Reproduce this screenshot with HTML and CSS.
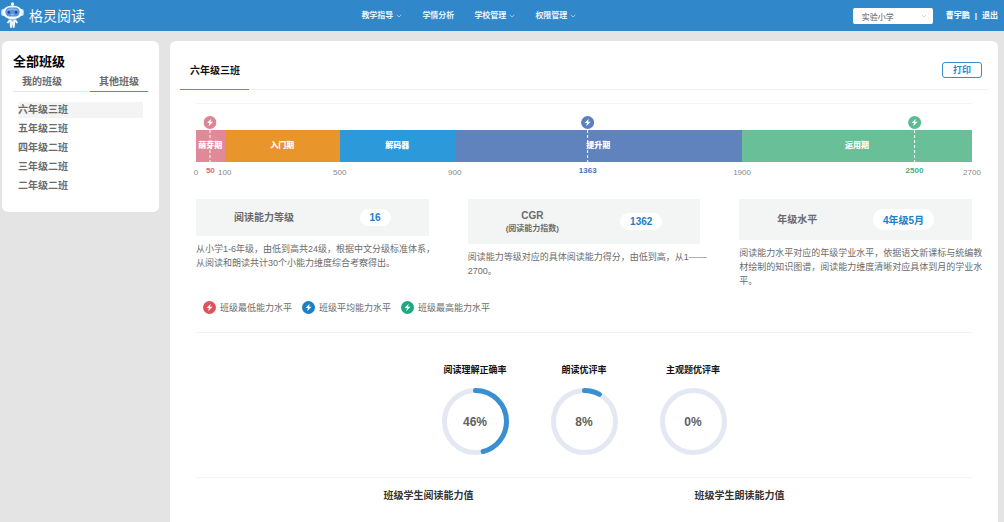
FILE: index.html
```html
<!DOCTYPE html>
<html lang="zh-CN">
<head>
    <meta charset="UTF-8">
    <meta name="viewport" content="width=device-width, initial-scale=1.0">
    <title>格灵阅读</title>
    <link rel="stylesheet" href="styles.css">
</head>
<body>
    <!-- Shared icons -->
    <svg class="sprite" aria-hidden="true">
        <symbol id="bolt" viewBox="0 0 13 13">
            <circle cx="6.5" cy="6.5" r="6.5" fill="currentColor"/>
            <path d="M7.6 2.8 3.6 7.1h2.3L5.2 10.3l4.3-4.5H7.1z" fill="#fff"/>
        </symbol>
        <symbol id="chevron" viewBox="0 0 6 4">
            <path d="M.7.8 3 3 5.3.8" fill="none" stroke="currentColor" stroke-width=".6"/>
        </symbol>
    </svg>

    <header class="header">
        <a href="#" class="logo">
            <svg class="logo-icon" viewBox="0 0 25 27" aria-hidden="true">
                <path d="M12.5 2v4" stroke="#dcecfa" stroke-width="1.4"/>
                <circle cx="12.5" cy="1.9" r="1.6" fill="#f4f9fe"/>
                <rect x="1.2" y="7" width="4" height="7" rx="2" fill="#cfe3f7"/>
                <rect x="19.8" y="7" width="4" height="7" rx="2" fill="#cfe3f7"/>
                <ellipse cx="12.5" cy="10.3" rx="10" ry="6.9" fill="#f6fafe"/>
                <rect x="5.4" y="5.6" width="14.200" height="8.800" rx="4.300" fill="#5b93dc"/>
                <path d="M6.600 8.800c1-2.400 4-2.400 5.900-2.400s4.900 0 5.900 2.400c-3-1.200-8.800-1.200-11.800 0z" fill="#8bb8ea"/>
                <ellipse cx="8.900" cy="10.200" rx="1.200" ry="1.500" fill="#1d4696"/>
                <ellipse cx="16.100" cy="10.200" rx="1.200" ry="1.500" fill="#1d4696"/>
                <path d="M11.300 12.300q1.200.9 2.400 0" fill="none" stroke="#d8ebff" stroke-width=".7"/>
                <path d="M9 17.400h7l2 3.400-1.500.6-1.300-1.700-.5 6.100h-1.900l-.2-3h-.4l-.2 3h-1.900l-.5-6.100-1.300 1.700-1.500-.6z" fill="#f1f7fd"/>
                <path d="M11 18.300h3l-1.500 1.700z" fill="#7fb0e6"/>
            </svg>
            <span>格灵阅读</span>
        </a>

        <nav class="nav">
            <a href="#">教学指导<svg class="chevron"><use href="#chevron"/></svg></a>
            <a href="#">学情分析</a>
            <a href="#">学校管理<svg class="chevron"><use href="#chevron"/></svg></a>
            <a href="#">权限管理<svg class="chevron"><use href="#chevron"/></svg></a>
        </nav>

        <div class="account">
            <div class="school">
                <select aria-label="学校">
                    <option>实验小学</option>
                </select>
                <svg class="chevron"><use href="#chevron"/></svg>
            </div>
            <a href="#">曹宇鹏</a>
            <span class="bar">|</span>
            <a href="#">退出</a>
        </div>
    </header>

    <div class="layout">
        <aside class="sidebar">
            <h2>全部班级</h2>
            <div class="side-tabs">
                <button type="button">我的班级</button>
                <button type="button" class="active">其他班级</button>
            </div>
            <ul class="class-list">
                <li><a href="#" class="active">六年级三班</a></li>
                <li><a href="#">五年级三班</a></li>
                <li><a href="#">四年级二班</a></li>
                <li><a href="#">三年级二班</a></li>
                <li><a href="#">二年级二班</a></li>
            </ul>
        </aside>

        <main class="main">
            <div class="main-head">
                <h1>六年级三班</h1>
                <button type="button" class="print-btn">打印</button>
            </div>

            <!-- Ability scale, 0 to 2700 -->
            <section class="scale-section">
                <div class="scale">
                    <div class="segments">
                        <div class="segment pink" style="width: 3.704%">萌芽期</div>
                        <div class="segment orange" style="width: 14.815%">入门期</div>
                        <div class="segment sky" style="width: 14.815%">解码器</div>
                        <div class="segment indigo" style="width: 37.037%">提升期</div>
                        <div class="segment green" style="width: 29.629%">运用期</div>
                    </div>
                    <span class="tick" style="left: 0%">0</span>
                    <span class="tick" style="left: 3.704%">100</span>
                    <span class="tick" style="left: 18.519%">500</span>
                    <span class="tick" style="left: 33.333%">900</span>
                    <span class="tick" style="left: 70.370%">1900</span>
                    <span class="tick" style="left: 100%">2700</span>
                    <div class="marker low" style="left: 1.852%">
                        <svg class="bolt"><use href="#bolt"/></svg>
                        <i></i>
                        <b>50</b>
                    </div>
                    <div class="marker avg" style="left: 50.481%">
                        <svg class="bolt"><use href="#bolt"/></svg>
                        <i></i>
                        <b>1363</b>
                    </div>
                    <div class="marker high" style="left: 92.593%">
                        <svg class="bolt"><use href="#bolt"/></svg>
                        <i></i>
                        <b>2500</b>
                    </div>
                </div>

                <div class="cards">
                    <article class="card">
                        <div class="card-head">
                            <h3>阅读能力等级</h3>
                            <span class="pill">16</span>
                        </div>
                        <p>从小学1-6年级，由低到高共24级，根据中文分级标准体系，从阅读和朗读共计30个小能力维度综合考察得出。</p>
                    </article>
                    <article class="card">
                        <div class="card-head">
                            <h3>CGR<small>(阅读能力指数)</small></h3>
                            <span class="pill">1362</span>
                        </div>
                        <p>阅读能力等级对应的具体阅读能力得分，由低到高，从1——2700。</p>
                    </article>
                    <article class="card">
                        <div class="card-head">
                            <h3>年级水平</h3>
                            <span class="pill">4年级5月</span>
                        </div>
                        <p>阅读能力水平对应的年级学业水平，依据语文新课标与统编教材绘制的知识图谱，阅读能力维度清晰对应具体到月的学业水平。</p>
                    </article>
                </div>

                <ul class="legend">
                    <li><svg class="bolt red"><use href="#bolt"/></svg>班级最低能力水平</li>
                    <li><svg class="bolt blue"><use href="#bolt"/></svg>班级平均能力水平</li>
                    <li><svg class="bolt teal"><use href="#bolt"/></svg>班级最高能力水平</li>
                </ul>
            </section>

            <!-- Rates -->
            <section class="rates">
                <div class="rate">
                    <h3>阅读理解正确率</h3>
                    <div class="ring">
                        <svg viewBox="0 0 67 67" aria-hidden="true">
                            <circle class="track" cx="33.5" cy="33.5" r="31"/>
                            <circle class="value" cx="33.5" cy="33.5" r="31" pathLength="100" stroke-dasharray="46 100"/>
                        </svg>
                        <span>46%</span>
                    </div>
                </div>
                <div class="rate">
                    <h3>朗读优评率</h3>
                    <div class="ring">
                        <svg viewBox="0 0 67 67" aria-hidden="true">
                            <circle class="track" cx="33.5" cy="33.5" r="31"/>
                            <circle class="value" cx="33.5" cy="33.5" r="31" pathLength="100" stroke-dasharray="8 100"/>
                        </svg>
                        <span>8%</span>
                    </div>
                </div>
                <div class="rate">
                    <h3>主观题优评率</h3>
                    <div class="ring">
                        <svg viewBox="0 0 67 67" aria-hidden="true">
                            <circle class="track" cx="33.5" cy="33.5" r="31"/>
                        </svg>
                        <span>0%</span>
                    </div>
                </div>
            </section>

            <section class="charts">
                <h3>班级学生阅读能力值</h3>
                <h3>班级学生朗读能力值</h3>
            </section>
        </main>
    </div>
</body>
</html>
```
FILE: styles.css
```css
* {
    margin: 0;
    padding: 0;
    box-sizing: border-box;
}

body {
    display: flex;
    flex-direction: column;
    min-height: 100vh;
    font-family: "Liberation Sans", "Noto Sans CJK SC", sans-serif;
    font-size: 9px;
    background: #e4e4e4;
    color: #6b6b6b;
}

a {
    color: inherit;
    text-decoration: none;
}

ul {
    list-style: none;
}

button,
select {
    font: inherit;
    color: inherit;
    border: none;
    background: none;
    cursor: pointer;
}

.sprite {
    display: none;
}

.chevron {
    width: 6px;
    height: 4px;
}

.bolt {
    width: 13px;
    height: 13px;
    flex: none;
}

/* Header */
.header {
    display: flex;
    align-items: center;
    justify-content: space-between;
    height: 31px;
    padding: 0 6px 0 0;
    background: #3088cb;
    color: #fff;
}

.logo {
    display: flex;
    align-items: center;
    gap: 4px;
    font-size: 14px;
    line-height: 20px;
}

.logo-icon {
    width: 25px;
    height: 27px;
}

.nav {
    display: flex;
    gap: 20px;
    font-size: 8px;
    font-weight: bold;
    line-height: 12px;
    color: #eaf4fc;
}

.nav a {
    display: flex;
    align-items: center;
    gap: 3px;
}

.account {
    display: flex;
    align-items: center;
    font-size: 8px;
    font-weight: bold;
    line-height: 12px;
}

.account .bar {
    margin: 0 5px;
}

.school {
    position: relative;
    margin-right: 13px;
    color: #bbb;
}

.school select {
    display: block;
    width: 80px;
    height: 16px;
    padding: 4px 18px 0 9px;
    appearance: none;
    border-radius: 2px;
    background: #fff;
    color: #555;
    font-weight: normal;
}

.school .chevron {
    position: absolute;
    top: 6px;
    right: 6px;
    pointer-events: none;
}

/* Page */
.layout {
    flex: 1;
    display: flex;
    align-items: flex-start;
    gap: 11px;
    padding: 10px 6px 0 2px;
}

.sidebar {
    flex: 0 0 157px;
    padding: 11px 11px 18px;
    background: #fff;
    border-radius: 6px;
}

.sidebar h2 {
    font-size: 13px;
    line-height: 20px;
    color: #000;
}

.side-tabs {
    display: flex;
}

.side-tabs button {
    padding: 1px 9px 0;
    font-size: 10px;
    font-weight: bold;
    line-height: 18px;
    text-align: left;
    border-bottom: 1px solid #e6e6e6;
}

.side-tabs button:first-child {
    flex: 1;
}

.side-tabs .active {
    border-bottom-color: #4a8ad0;
}

.class-list {
    display: grid;
    gap: 3px;
    padding: 10px 5px 0;
}

.class-list a {
    display: block;
    font-size: 10px;
    font-weight: bold;
    line-height: 16px;
}

.class-list .active {
    background: #f4f4f4;
}

.main {
    flex: 1;
    align-self: stretch;
    padding: 0 10px;
    background: #fff;
    border-radius: 6px 6px 0 0;
}

.main-head {
    display: flex;
    align-items: center;
    justify-content: space-between;
    padding-right: 6px;
    border-bottom: 1px solid #f2f2f2;
}

.main-head h1 {
    margin-bottom: -1px;
    padding: 20px 9px 8px 10px;
    font-size: 10px;
    line-height: 20px;
    color: #111;
    border-bottom: 1px solid #4a92d6;
}

.print-btn {
    margin-top: 10px;
    padding: 0 10px;
    border: 1px solid #3a8bcb;
    border-radius: 3px;
    font-size: 9px;
    font-weight: bold;
    line-height: 14px;
    color: #3088cb;
}

/* Scale */
.scale-section {
    margin: 13px 16px 0;
    padding-top: 26px;
    border-top: 1px solid #f4f4f4;
    border-bottom: 1px solid #f2f2f2;
}

.scale {
    position: relative;
    padding-bottom: 37px;
    font-size: 8px;
    line-height: 10px;
}

.segments {
    display: flex;
}

.segment {
    font-weight: 900;
    line-height: 32px;
    text-align: center;
    white-space: nowrap;
    color: #fff;
}

.pink { background: #e08998; }
.orange { background: #e8962c; }
.sky { background: #2c9ada; }
.indigo { background: #6083bd; }
.green { background: #68bf98; }

.tick {
    position: absolute;
    top: 38px;
    transform: translateX(-50%);
    color: #888;
}

.marker {
    position: absolute;
    top: -14px;
    display: flex;
    flex-direction: column;
    align-items: center;
    transform: translateX(-50%);
}

.marker i {
    width: 1px;
    height: 32px;
    margin: 1px 0 4px;
    background: repeating-linear-gradient(#fff 0 3px, transparent 3px 5px);
}

.low { color: #de8595; }
.low b { color: #d9667c; }
.avg { color: #5b80c0; }
.avg b { color: #4672b8; }
.high { color: #5cbb90; }
.high b { color: #45b080; }

/* Cards */
.cards {
    display: grid;
    grid-template-columns: repeat(3, 1fr);
    gap: 39px;
    align-items: start;
}

.card-head {
    display: flex;
    align-items: center;
    justify-content: space-between;
    padding: 10px 38px;
    background: #f3f4f4;
}

.card-head h3 {
    font-size: 10px;
    font-weight: bold;
    line-height: 14px;
    text-align: center;
}

.card-head small {
    display: block;
    font-size: 8px;
    line-height: 11px;
}

.pill {
    padding: 3px 10px;
    border-radius: 10px;
    background: #fff;
    font-size: 10px;
    font-weight: bold;
    color: #2080c8;
}

/* description runs slightly into the column gap */
.card p {
    margin: 6px -12px 0 0;
    line-height: 14px;
}

.legend {
    display: flex;
    gap: 10px;
    padding: 13px 7px 18px;
}

.legend li {
    display: flex;
    align-items: center;
    gap: 4px;
}

.red { color: #e5505a; }
.blue { color: #1b7fc6; }
.teal { color: #1aab86; }

/* Rates */
.rates {
    display: flex;
    justify-content: center;
    margin: 0 16px;
    padding: 30px 0 22px;
    border-bottom: 1px solid #f4f4f4;
}

.rate {
    width: 109px;
    text-align: center;
}

.rate h3 {
    margin-bottom: 10px;
    font-size: 9px;
    line-height: 15px;
    color: #111;
}

.ring {
    display: grid;
    place-items: center;
}

.ring > * {
    grid-area: 1 / 1;
}

.ring svg {
    width: 67px;
    height: 67px;
}

.ring circle {
    fill: none;
    stroke-width: 5;
}

.ring .track {
    stroke: #e3e8f3;
}

.ring .value {
    stroke: #3a8fd0;
    stroke-linecap: round;
    transform: rotate(-90deg);
    transform-origin: center;
}

.ring span {
    font-size: 12px;
    font-weight: bold;
    color: #606060;
}

.charts {
    display: grid;
    grid-template-columns: 1fr 1fr;
    width: 77%;
    margin: 0 auto;
    padding-top: 10px;
    text-align: center;
}

.charts h3 {
    font-size: 10px;
    font-weight: bold;
    line-height: 16px;
    color: #333;
}
```
